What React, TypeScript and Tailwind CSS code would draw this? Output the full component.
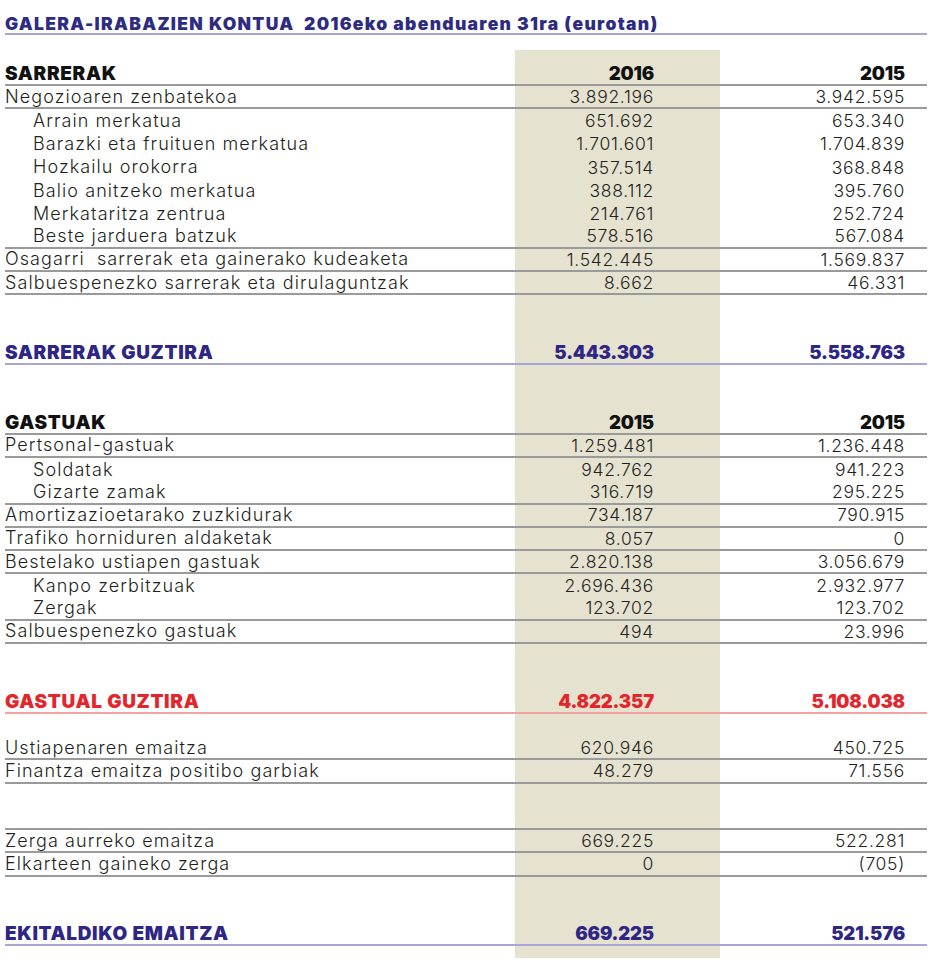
import clsx from "clsx";

type Row = {
  label?: string;
  a?: string;
  b?: string;
  kind?: "item" | "sub" | "head" | "blue" | "red";
  line?: "gray" | "blue" | "red";
};

const rows: Row[] = [
  { label: "SARRERAK", a: "2016", b: "2015", kind: "head", line: "gray" },
  { label: "Negozioaren zenbatekoa", a: "3.892.196", b: "3.942.595", line: "gray" },
  { label: "Arrain merkatua", a: "651.692", b: "653.340", kind: "sub" },
  { label: "Barazki eta fruituen merkatua", a: "1.701.601", b: "1.704.839", kind: "sub" },
  { label: "Hozkailu orokorra", a: "357.514", b: "368.848", kind: "sub" },
  { label: "Balio anitzeko merkatua", a: "388.112", b: "395.760", kind: "sub" },
  { label: "Merkataritza zentrua", a: "214.761", b: "252.724", kind: "sub" },
  { label: "Beste jarduera batzuk", a: "578.516", b: "567.084", kind: "sub", line: "gray" },
  { label: "Osagarri  sarrerak eta gainerako kudeaketa", a: "1.542.445", b: "1.569.837", line: "gray" },
  { label: "Salbuespenezko sarrerak eta dirulaguntzak", a: "8.662", b: "46.331", line: "gray" },
  {},
  {},
  { label: "SARRERAK GUZTIRA", a: "5.443.303", b: "5.558.763", kind: "blue", line: "blue" },
  {},
  {},
  { label: "GASTUAK", a: "2015", b: "2015", kind: "head", line: "gray" },
  { label: "Pertsonal-gastuak", a: "1.259.481", b: "1.236.448", line: "gray" },
  { label: "Soldatak", a: "942.762", b: "941.223", kind: "sub" },
  { label: "Gizarte zamak", a: "316.719", b: "295.225", kind: "sub", line: "gray" },
  { label: "Amortizazioetarako zuzkidurak", a: "734.187", b: "790.915", line: "gray" },
  { label: "Trafiko horniduren aldaketak", a: "8.057", b: "0", line: "gray" },
  { label: "Bestelako ustiapen gastuak", a: "2.820.138", b: "3.056.679", line: "gray" },
  { label: "Kanpo zerbitzuak", a: "2.696.436", b: "2.932.977", kind: "sub" },
  { label: "Zergak", a: "123.702", b: "123.702", kind: "sub", line: "gray" },
  { label: "Salbuespenezko gastuak", a: "494", b: "23.996", line: "gray" },
  {},
  {},
  { label: "GASTUAL GUZTIRA", a: "4.822.357", b: "5.108.038", kind: "red", line: "red" },
  {},
  { label: "Ustiapenaren emaitza", a: "620.946", b: "450.725", line: "gray" },
  { label: "Finantza emaitza positibo garbiak", a: "48.279", b: "71.556", line: "gray" },
  {},
  { line: "gray" },
  { label: "Zerga aurreko emaitza", a: "669.225", b: "522.281", line: "gray" },
  { label: "Elkarteen gaineko zerga", a: "0", b: "(705)", line: "gray" },
  {},
  {},
  { label: "EKITALDIKO EMAITZA", a: "669.225", b: "521.576", kind: "blue", line: "blue" },
];

const colour = (kind?: Row["kind"]) =>
  kind === "blue" ? "text-[#2e2685]" : kind === "red" ? "text-[#e3262b]" : kind === "head" ? "text-[#111111]" : "text-[#231f20]";

const isBold = (kind?: Row["kind"]) => kind === "head" || kind === "blue" || kind === "red";

const TableRow = ({ row }: { row: Row }) => {
  const bold = isBold(row.kind);
  const label = bold
    ? "font-black text-[19px] tracking-[0.035em]"
    : "font-light text-[18px] tracking-[0.06em]";
  const num = bold
    ? "font-black text-[18.5px] tracking-[-0.01em]"
    : "font-light text-[17.5px] tracking-[0.04em]";
  const c = colour(row.kind);
  return (
    <div
      className={clsx(
        "grid grid-cols-[510px_205px_207px] h-[23.25px] leading-none",
        row.line === "gray" && "border-b-2 border-[#9a9a9a]",
        row.line === "blue" && "border-b-2 border-[#a9a5d6]",
        row.line === "red" && "border-b-2 border-[#f3a1a1]"
      )}
    >
      <div className={clsx("flex items-center whitespace-pre", row.kind === "sub" && "pl-[28px]", label, c)}>
        {row.label}
      </div>
      <div className={clsx("flex items-center justify-end pr-[66px] bg-[#e6e2d0]", num, c)}>{row.a}</div>
      <div className={clsx("flex items-center justify-end pr-[22px]", num, c)}>{row.b}</div>
    </div>
  );
};

export default function App() {
  return (
    <div className="w-[943px] h-[969px] bg-white px-[5px] font-['Inter','Liberation_Sans',sans-serif]">
      <div className="w-[922px]">
        <div className="h-[35px] flex items-end pb-[1px] border-b-2 border-[#a9a5d6]">
          <h1 className="font-black text-[17.5px] leading-none tracking-[0.075em] text-[#2e2b82] whitespace-pre">
            {"GALERA-IRABAZIEN KONTUA  2016eko abenduaren 31ra (eurotan)"}
          </h1>
        </div>
        <div className="h-[15px]" />
        <div className="grid grid-cols-[510px_205px_207px] h-[12.75px]">
          <div />
          <div className="bg-[#e6e2d0]" />
          <div />
        </div>
        {rows.map((row, i) => (
          <TableRow key={i} row={row} />
        ))}
        <div className="grid grid-cols-[510px_205px_207px] h-[12px]">
          <div />
          <div className="bg-[#e6e2d0]" />
          <div />
        </div>
      </div>
    </div>
  );
}
